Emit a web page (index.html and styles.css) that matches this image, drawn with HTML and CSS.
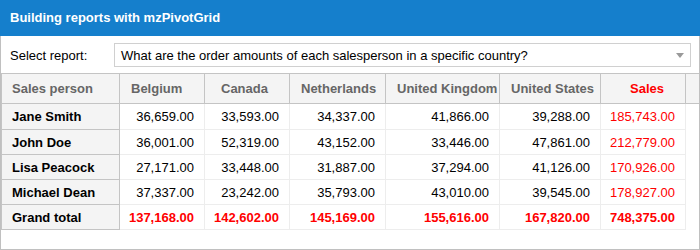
FILE: index.html
```html
<!DOCTYPE html>
<html>
<head>
<meta charset="utf-8">
<title>mzPivotGrid</title>
<link rel="stylesheet" href="styles.css">
</head>
<body>
<div class="panel">
  <div class="panel-header">Building reports with mzPivotGrid</div>
  <div class="panel-body">
    <div class="report-row">
      <span class="report-label">Select report:</span>
      <div class="select">
        <span class="select-text">What are the order amounts of each salesperson in a specific country?</span>
        <span class="select-arrow"></span>
      </div>
    </div>
    <div class="grid">
      <div class="grid-row head-row">
        <div class="cell head name">Sales person</div>
        <div class="cell head">Belgium</div>
        <div class="cell head col-canada">Canada</div>
        <div class="cell head">Netherlands</div>
        <div class="cell head">United Kingdom</div>
        <div class="cell head">United States</div>
        <div class="cell head col-sales">Sales</div>
        <div class="cell head filler"></div>
      </div>
      <div class="grid-row first-row">
        <div class="cell name">Jane Smith</div>
        <div class="cell num">36,659.00</div>
        <div class="cell num">33,593.00</div>
        <div class="cell num">34,337.00</div>
        <div class="cell num">41,866.00</div>
        <div class="cell num">39,288.00</div>
        <div class="cell num total">185,743.00</div>
      </div>
      <div class="grid-row">
        <div class="cell name">John Doe</div>
        <div class="cell num">36,001.00</div>
        <div class="cell num">52,319.00</div>
        <div class="cell num">43,152.00</div>
        <div class="cell num">33,446.00</div>
        <div class="cell num">47,861.00</div>
        <div class="cell num total">212,779.00</div>
      </div>
      <div class="grid-row">
        <div class="cell name">Lisa Peacock</div>
        <div class="cell num">27,171.00</div>
        <div class="cell num">33,448.00</div>
        <div class="cell num">31,887.00</div>
        <div class="cell num">37,294.00</div>
        <div class="cell num">41,126.00</div>
        <div class="cell num total">170,926.00</div>
      </div>
      <div class="grid-row">
        <div class="cell name">Michael Dean</div>
        <div class="cell num">37,337.00</div>
        <div class="cell num">23,242.00</div>
        <div class="cell num">35,793.00</div>
        <div class="cell num">43,010.00</div>
        <div class="cell num">39,545.00</div>
        <div class="cell num total">178,927.00</div>
      </div>
      <div class="grid-row grand-row">
        <div class="cell name">Grand total</div>
        <div class="cell num total">137,168.00</div>
        <div class="cell num total">142,602.00</div>
        <div class="cell num total">145,169.00</div>
        <div class="cell num total">155,616.00</div>
        <div class="cell num total">167,820.00</div>
        <div class="cell num total">748,375.00</div>
      </div>
    </div>
  </div>
</div>
</body>
</html>
```
FILE: styles.css
```css
body {
  margin: 0;
  font-family: "Liberation Sans", Arial, sans-serif;
  font-size: 13px;
  color: #000;
  background: #fff;
}

.panel {
  width: 700px;
  height: 250px;
  display: flex;
  flex-direction: column;
}

.panel-header {
  height: 36px;
  line-height: 36px;
  padding-left: 10px;
  background: #157fcc;
  color: #fff;
  font-weight: bold;
  font-size: 13px;
}

.panel-body {
  flex: 1;
  border: 1px solid #c0c0c0;
  border-top: 0;
}

.report-row {
  display: flex;
  align-items: center;
  padding: 7px 0 6px 9px;
}

.report-label {
  width: 104px;
  flex: none;
}

.select {
  width: 577px;
  height: 24px;
  box-sizing: border-box;
  border: 1px solid #d0d0d0;
  display: flex;
  align-items: center;
  padding-left: 6px;
  padding-right: 6px;
}

.select-text {
  flex: 1;
  white-space: nowrap;
}

.select-arrow {
  width: 0;
  height: 0;
  border-left: 4px solid transparent;
  border-right: 4px solid transparent;
  border-top: 5px solid #9a9a9a;
  margin-top: 1px;
}

.grid-row {
  display: grid;
  grid-template-columns: 119px 85px 85px 96px 114px 101px 85px;
  height: 25px;
}

.head-row {
  grid-template-columns: 119px 85px 85px 96px 114px 101px 85px 13px;
  height: 31px;
}

.first-row {
  height: 26px;
}

.cell {
  box-sizing: border-box;
  display: flex;
  align-items: center;
  white-space: nowrap;
  overflow: hidden;
  border-right: 1px solid #ededed;
  border-bottom: 1px solid #ededed;
}

.head {
  background: #f4f4f4;
  color: #666;
  font-weight: bold;
  padding-left: 11px;
  border-top: 1px solid #c4c4c4;
  border-right: 1px solid #c4c4c4;
  border-bottom: 1px solid #c4c4c4;
}

.head.col-canada {
  padding-left: 16px;
}

.head.col-sales {
  padding-left: 29px;
  color: #f00;
}

.head.filler {
  border-right: 0;
  padding: 0;
}

.name {
  background: #f4f4f4;
  font-weight: bold;
  padding-left: 10px;
  border-left: 1px solid #c4c4c4;
  border-right: 1px solid #c4c4c4;
  border-bottom: 1px solid #c4c4c4;
}

.head.name {
  color: #666;
}

.num {
  justify-content: flex-end;
  padding-right: 10px;
}

.total {
  color: #f00;
}

.grand-row .total {
  font-weight: bold;
}
```
